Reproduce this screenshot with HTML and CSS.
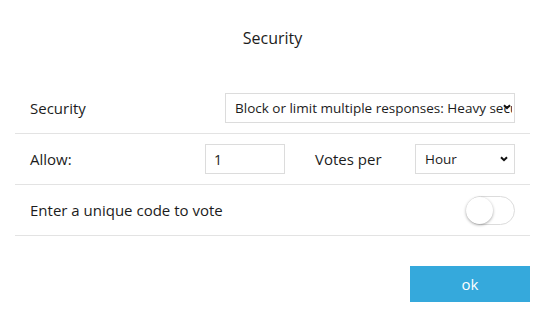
FILE: index.html
```html
<!DOCTYPE html>
<html>
<head>
<meta charset="utf-8">
<link rel="stylesheet" href="styles.css">
</head>
<body>
<div class="dialog">
  <div class="title">Security</div>
  <div class="rows">
    <div class="row">
      <span class="label label-main">Security</span>
      <span class="select-wrap select-wide">
        <select class="select">
          <option>Block or limit multiple responses: Heavy security</option>
        </select>
        <svg class="chev chev-wide" width="8" height="6" viewBox="0 0 8 6"><path d="M1 1.2 L4 4.2 L7 1.2" fill="none" stroke="#111" stroke-width="2"/></svg>
      </span>
    </div>
    <div class="row">
      <span class="label label-allow">Allow:</span>
      <input class="input" type="text" value="1">
      <span class="label label-per">Votes per</span>
      <span class="select-wrap select-small">
        <select class="select">
          <option>Hour</option>
        </select>
        <svg class="chev" width="8" height="6" viewBox="0 0 8 6"><path d="M1 1.2 L4 4.2 L7 1.2" fill="none" stroke="#111" stroke-width="2"/></svg>
      </span>
    </div>
    <div class="row">
      <span class="label label-grow">Enter a unique code to vote</span>
      <span class="toggle"><span class="knob"></span></span>
    </div>
  </div>
  <div class="footer">
    <button class="ok">ok</button>
  </div>
</div>
</body>
</html>
```
FILE: styles.css
```css
* { box-sizing: border-box; }
html, body { margin: 0; padding: 0; background: #fff; }
body {
  font-family: "Open Sans", "Noto Sans", sans-serif;
  color: #1c1c1c;
  width: 545px;
  height: 317px;
  overflow: hidden;
}
.dialog { padding: 0 15px; }
.title {
  height: 83px;
  padding-top: 27px;
  text-align: center;
  font-size: 16px;
  line-height: 22px;
}
.row {
  display: flex;
  align-items: center;
  height: 51px;
  padding: 0 15px;
  border-bottom: 1px solid #e3e3e3;
  font-size: 15px;
}
.label { white-space: nowrap; }
.label-main { width: 195px; flex: none; }
.label-allow { width: 175px; flex: none; }
.label-per { width: 100px; flex: none; padding-left: 30px; box-sizing: content-box; }
.label-grow { flex: 1; }
.select-wrap {
  position: relative;
  display: block;
  height: 30px;
  flex: none;
}
.select-wide { width: 290px; }
.select-small { width: 100px; }
.select {
  -webkit-appearance: none;
  appearance: none;
  display: block;
  width: 100%;
  height: 30px;
  border: 1px solid #dcdcdc;
  border-radius: 0;
  background: #fff;
  font-family: inherit;
  font-size: 13.5px;
  color: #1c1c1c;
  padding: 0 2px 0 9px;
  outline: none;
}
.chev {
  position: absolute;
  right: 7px;
  top: 12px;
}
.chev-wide { right: 4px; top: 11px; }
.input {
  width: 80px;
  height: 30px;
  border: 1px solid #dcdcdc;
  font-family: inherit;
  font-size: 14px;
  color: #1c1c1c;
  padding: 0 8px;
  outline: none;
}
.toggle {
  position: relative;
  width: 49px;
  height: 29px;
  border: 1px solid #dcdcdc;
  border-radius: 15px;
  background: #fff;
}
.knob {
  position: absolute;
  left: -1px;
  top: 0;
  width: 27px;
  height: 27px;
  border-radius: 50%;
  background: #fff;
  box-shadow: 0 1px 3px rgba(0,0,0,0.35);
}
.footer {
  display: flex;
  justify-content: flex-end;
  padding-top: 30px;
}
.ok {
  width: 120px;
  height: 36px;
  border: none;
  background: #35a9dc;
  color: #fff;
  font-family: inherit;
  font-size: 15px;
}
```
